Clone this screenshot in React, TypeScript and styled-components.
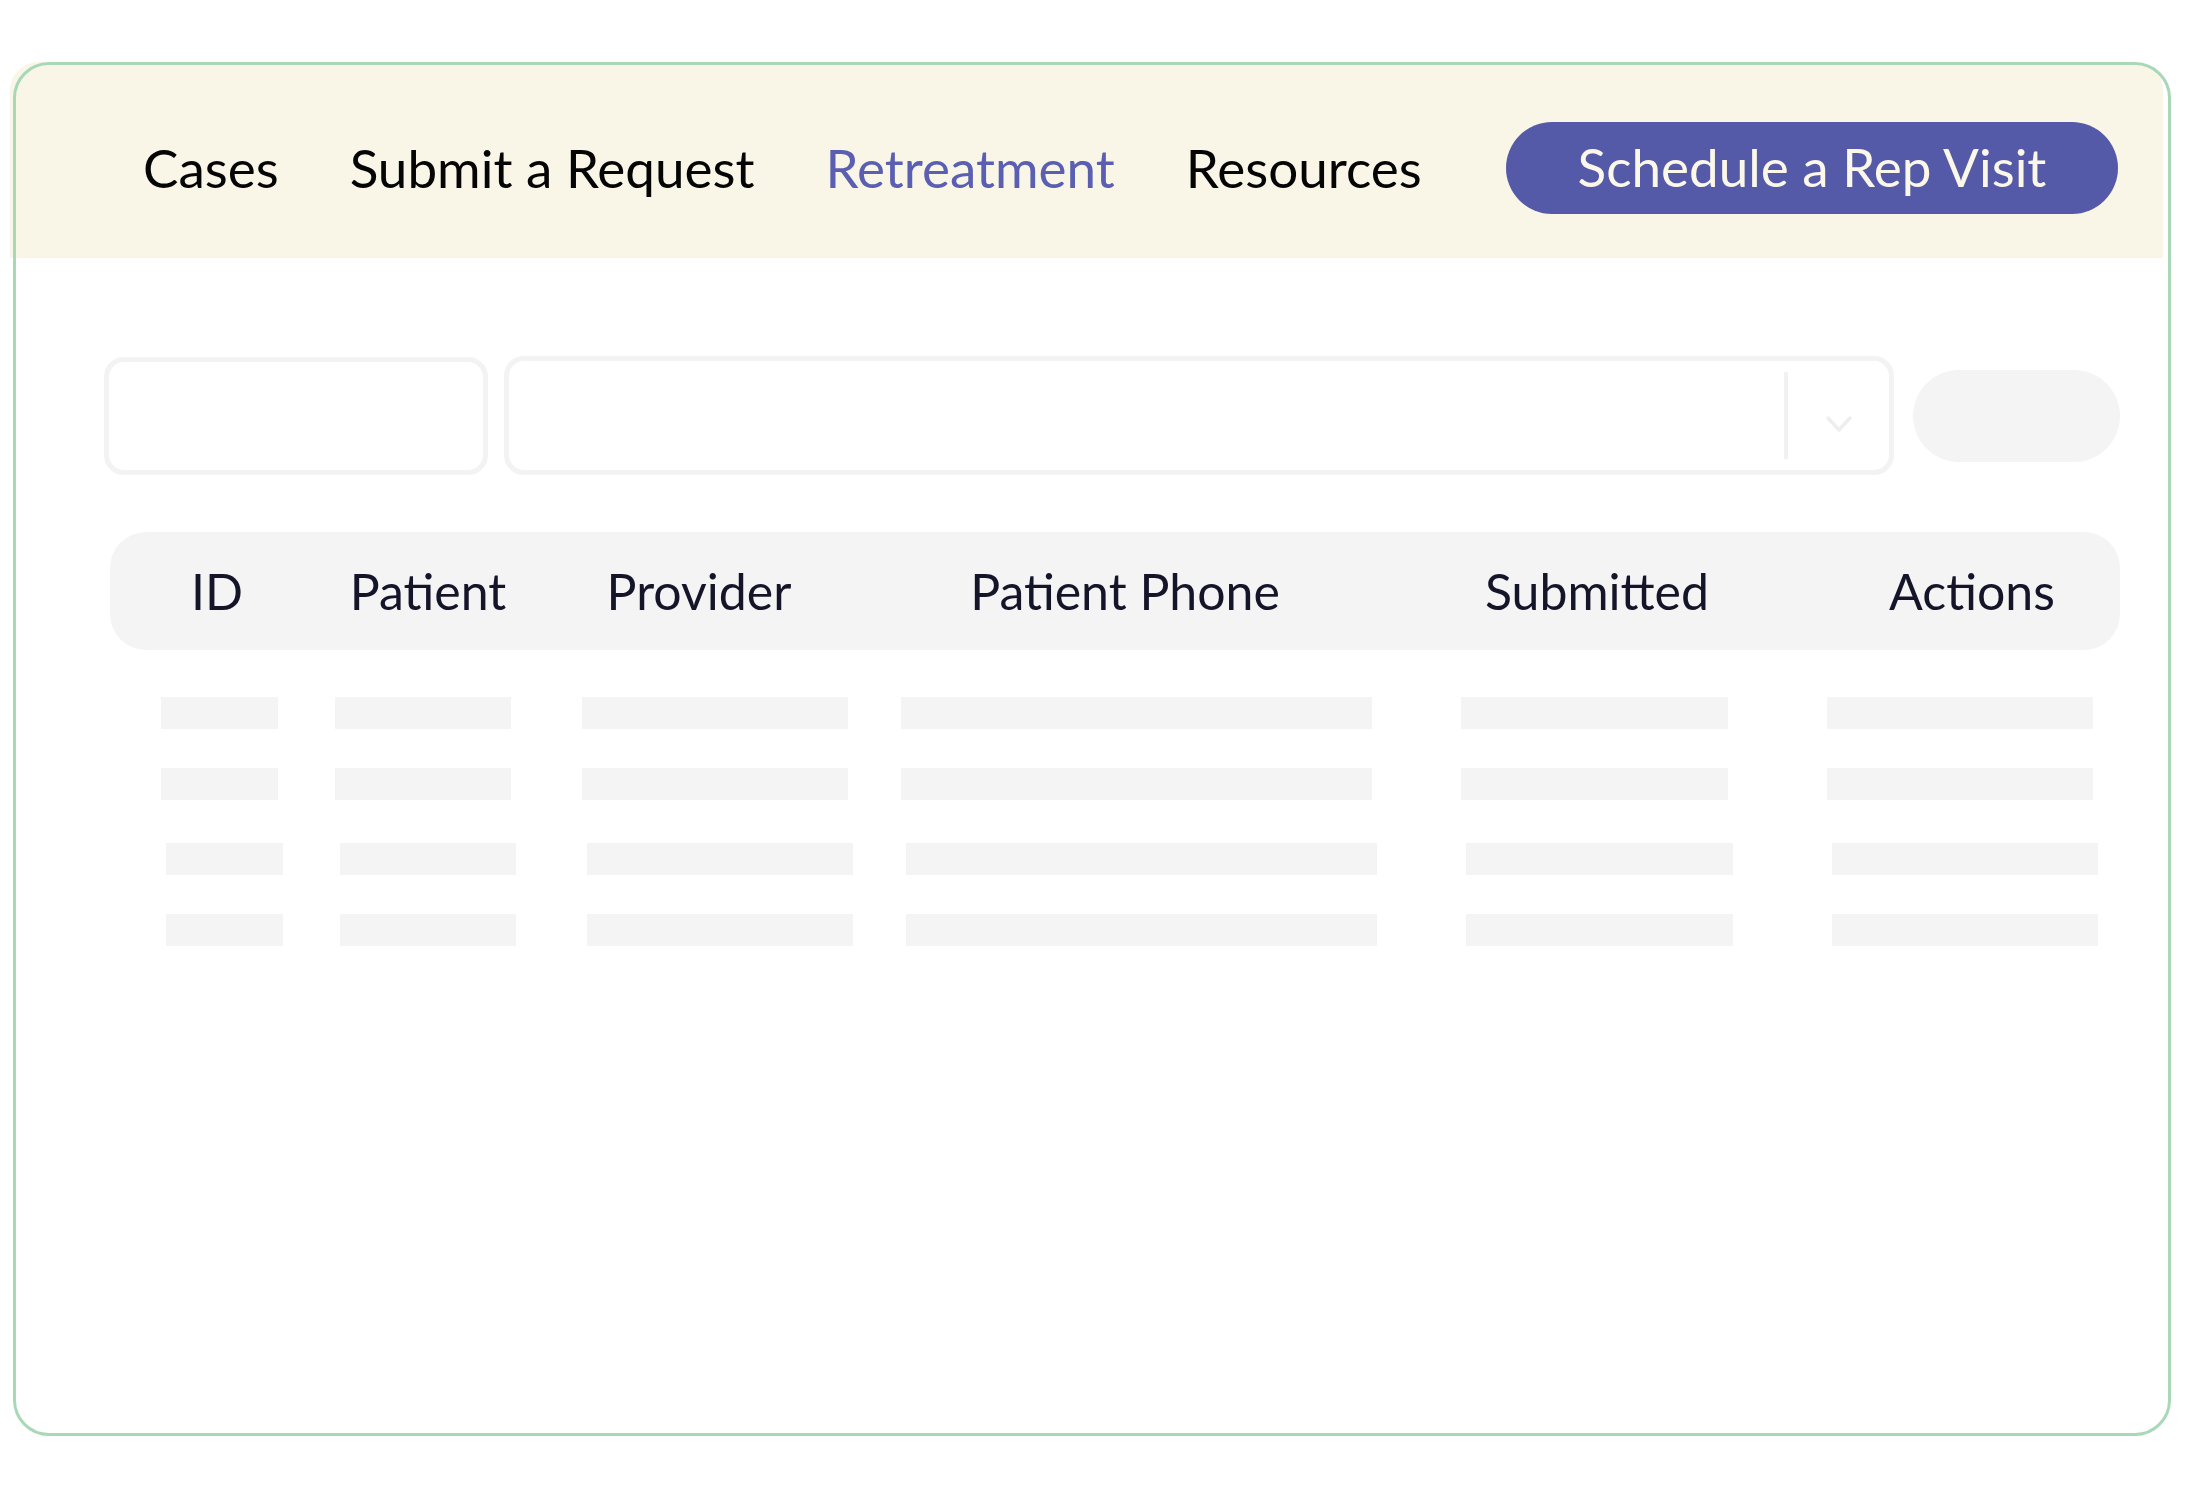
import { FC } from "react"
import styled, { createGlobalStyle } from "styled-components"

const Global = createGlobalStyle`
  body {
    margin: 0;
    background: #fff;
    font-family: Lato, "Liberation Sans", sans-serif;
  }
`

const Page = styled.div`
  padding: 66px 0 50px 13px;
`

const Card = styled.div`
  position: relative;
  width: 2158px;
  height: 1374px;
  box-sizing: border-box;
  background: #fff;
  border-radius: 36px;
  &::after {
    content: "";
    position: absolute;
    inset: 0;
    border: 3px solid #a9d8b7;
    border-radius: 36px;
    pointer-events: none;
  }
`

const Header = styled.header`
  margin: -4px 0 0 -3px;
  width: 2153px;
  height: 196px;
  box-sizing: border-box;
  padding: 16px 45px 0 133px;
  background: #f9f6e8;
  border-radius: 28px 28px 0 0;
  display: flex;
  align-items: center;
  justify-content: space-between;
`

const Nav = styled.nav`
  display: flex;
  align-items: center;
  gap: 71px;
`

const NavLink = styled.a<{ $active?: boolean }>`
  font-size: 53px;
  line-height: 1.2;
  color: ${(p) => (p.$active ? "#5a5fb2" : "#050505")};
  text-decoration: none;
  white-space: nowrap;
`

const RepButton = styled.button`
  width: 612px;
  height: 92px;
  border: none;
  border-radius: 46px;
  background: #545aa8;
  color: #fbf7e9;
  font-family: Lato, "Liberation Sans", sans-serif;
  font-size: 53px;
  padding: 0 0 4px;
  white-space: nowrap;
`

const Body = styled.div`
  padding: 98px 51px 0 91px;
`

const Filters = styled.div`
  display: flex;
  align-items: center;
  gap: 16px;
`

const TextBox = styled.div`
  width: 384px;
  height: 118px;
  box-sizing: border-box;
  border: 5px solid #f3f3f3;
  border-radius: 20px;
`

const SelectBox = styled.div`
  flex: 1;
  height: 119px;
  box-sizing: border-box;
  border: 5px solid #f3f3f3;
  border-radius: 20px;
  display: flex;
  align-items: center;
`

const SelectValue = styled.div`
  flex: 1;
`

const Divider = styled.div`
  width: 4px;
  height: 87px;
  background: #f1f1f1;
`

const ChevronBox = styled.div`
  width: 101px;
  display: flex;
  justify-content: center;
  padding-top: 16px;
`

const GoButton = styled.div`
  width: 207px;
  height: 92px;
  margin-left: 3px;
  border-radius: 46px;
  background: #f4f4f4;
`

const TableHead = styled.div`
  margin: 57px 0 0 6px;
  height: 118px;
  border-radius: 36px;
  background: #f4f4f4;
  display: grid;
  grid-template-columns: 214px 208px 334px 518px 426px 324px;
  align-items: center;
`

const HeadCell = styled.div`
  justify-self: center;
  font-size: 50px;
  line-height: 1.2;
  color: #15152a;
  white-space: nowrap;
`

const Rows = styled.div`
  display: flex;
  flex-direction: column;
  gap: 43px;
  margin-top: 47px;
`

const Group = styled.div<{ $shift: number }>`
  display: flex;
  flex-direction: column;
  gap: 39px;
  padding-left: ${(p) => 57 + p.$shift}px;
`

const SkeletonRow = styled.div`
  display: flex;
`

const Bar = styled.div<{ $w: number; $gap: number }>`
  width: ${(p) => p.$w}px;
  height: 32px;
  margin-left: ${(p) => p.$gap}px;
  background: #f4f4f4;
`

const columns = ["ID", "Patient", "Provider", "Patient Phone", "Submitted", "Actions"]

// placeholder bar widths and the space before each one
const bars = [
  { w: 117, gap: 0 },
  { w: 176, gap: 57 },
  { w: 266, gap: 71 },
  { w: 471, gap: 53 },
  { w: 267, gap: 89 },
  { w: 266, gap: 99 },
]

const Skeleton: FC = () => (
  <SkeletonRow>
    {bars.map((b, i) => (
      <Bar key={i} $w={b.w} $gap={b.gap} />
    ))}
  </SkeletonRow>
)

const App: FC = () => {
  return (
    <Page>
      <Global />
      <Card>
        <Header>
          <Nav>
            <NavLink>Cases</NavLink>
            <NavLink>Submit a Request</NavLink>
            <NavLink $active>Retreatment</NavLink>
            <NavLink>Resources</NavLink>
          </Nav>
          <RepButton>Schedule a Rep Visit</RepButton>
        </Header>
        <Body>
          <Filters>
            <TextBox />
            <SelectBox>
              <SelectValue />
              <Divider />
              <ChevronBox>
                <svg width="28" height="18" viewBox="0 0 28 18" fill="none">
                  <path d="M3 3 L14 15 L25 3" stroke="#eeeeee" strokeWidth="3.5" strokeLinecap="round" strokeLinejoin="round" />
                </svg>
              </ChevronBox>
            </SelectBox>
            <GoButton />
          </Filters>
          <TableHead>
            {columns.map((c) => (
              <HeadCell key={c}>{c}</HeadCell>
            ))}
          </TableHead>
          <Rows>
            <Group $shift={0}>
              <Skeleton />
              <Skeleton />
            </Group>
            <Group $shift={5}>
              <Skeleton />
              <Skeleton />
            </Group>
          </Rows>
        </Body>
      </Card>
    </Page>
  )
}

export default App
